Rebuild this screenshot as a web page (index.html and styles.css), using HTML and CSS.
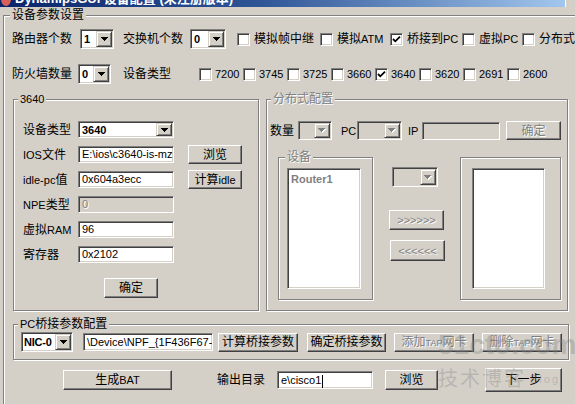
FILE: index.html
```html
<!DOCTYPE html>
<html lang="zh-CN">
<head>
<meta charset="utf-8">
<title>DynamipsGUI 设备配置</title>
<link rel="stylesheet" href="styles.css">
</head>
<body>
<div class="titlebar">
  <span class="ticon"></span>
  <span class="ttext">DynamipsGUI 设备配置 (未注册版本)</span>
  <span class="tbtn"></span>
</div>

<div class="group outer">
  <div class="legend lg6">设备参数设置</div>

  <div class="row r1">
    <span class="w60">路由器个数</span>
    <div class="combo cb-a"><span class="val bold">1</span><span class="arrow"><svg width="7" height="4" viewBox="0 0 7 4"><path d="M0 0h7v1h-1v1h-1v1h-1v1h-1v-1h-1v-1h-1v-1h-1z"/></svg></span></div>
    <span class="w60 ml9">交换机个数</span>
    <div class="combo cb-b"><span class="val bold">0</span><span class="arrow"><svg width="7" height="4" viewBox="0 0 7 4"><path d="M0 0h7v1h-1v1h-1v1h-1v1h-1v-1h-1v-1h-1v-1h-1z"/></svg></span></div>
    <div class="checks1">
      <div class="chk"><span class="box"></span><span class="t">模拟帧中继</span></div>
      <div class="chk"><span class="box"></span><span class="t">模拟<span class="l">ATM</span></span></div>
      <div class="chk"><span class="box"><svg width="9" height="9" viewBox="0 0 9 9"><polyline points="1,4 3.3,6.3 8,1.6" fill="none" stroke="#000" stroke-width="1.8"/></svg></span><span class="t">桥接到<span class="l">PC</span></span></div>
      <div class="chk"><span class="box"></span><span class="t">虚拟<span class="l">PC</span></span></div>
      <div class="chk"><span class="box"></span><span class="t">分布式</span></div>
    </div>
  </div>

  <div class="row r2">
    <span class="w60">防火墙数量</span>
    <div class="combo cb-c"><span class="val bold">0</span><span class="arrow"><svg width="7" height="4" viewBox="0 0 7 4"><path d="M0 0h7v1h-1v1h-1v1h-1v1h-1v-1h-1v-1h-1v-1h-1z"/></svg></span></div>
    <span class="w48 ml12">设备类型</span>
    <div class="checks2">
      <div class="chk c2"><span class="box"></span><span class="l">7200</span></div>
      <div class="chk c2"><span class="box"></span><span class="l">3745</span></div>
      <div class="chk c2"><span class="box"></span><span class="l">3725</span></div>
      <div class="chk c2"><span class="box"></span><span class="l">3660</span></div>
      <div class="chk c2"><span class="box"><svg width="9" height="9" viewBox="0 0 9 9"><polyline points="1,4 3.3,6.3 8,1.6" fill="none" stroke="#000" stroke-width="1.8"/></svg></span><span class="l">3640</span></div>
      <div class="chk c2"><span class="box"></span><span class="l">3620</span></div>
      <div class="chk c2"><span class="box"></span><span class="l">2691</span></div>
      <div class="chk c2"><span class="box"></span><span class="l">2600</span></div>
    </div>
  </div>

  <div class="mid">
    <div class="group g3640">
      <div class="legend lg4 l">3640</div>
      <div class="form">
        <div class="frow">
          <span class="flbl">设备类型</span>
          <div class="combo cb-type"><span class="val bold">3640</span><span class="arrow"><svg width="7" height="4" viewBox="0 0 7 4"><path d="M0 0h7v1h-1v1h-1v1h-1v1h-1v-1h-1v-1h-1v-1h-1z"/></svg></span></div>
        </div>
        <div class="frow">
          <span class="flbl"><span class="l">IOS</span>文件</span>
          <div class="field fw96">E:\ios\c3640-is-mz.bin</div>
          <div class="btn bsm">浏览</div>
        </div>
        <div class="frow">
          <span class="flbl"><span class="l">idle-pc</span>值</span>
          <div class="field fw96">0x604a3ecc</div>
          <div class="btn bsm"><span>计算<span class="l">idle</span></span></div>
        </div>
        <div class="frow">
          <span class="flbl"><span class="l">NPE</span>类型</span>
          <div class="field fw96 dis">0</div>
        </div>
        <div class="frow">
          <span class="flbl">虚拟<span class="l">RAM</span></span>
          <div class="field fw96">96</div>
        </div>
        <div class="frow">
          <span class="flbl">寄存器</span>
          <div class="field fw96">0x2102</div>
        </div>
      </div>
      <div class="btn ok3640">确定</div>
    </div>

    <div class="group gdist">
      <div class="legend lg4 dis">分布式配置</div>
      <div class="drow">
        <span class="w24">数量</span>
        <div class="combo dis cb-num"><span class="val"></span><span class="arrow"><svg width="8" height="5" viewBox="0 0 8 5"><path fill="#fff" d="M1 1h7v1h-1v1h-1v1h-1v1h-1v-1h-1v-1h-1v-1h-1z"/><path fill="#808080" d="M0 0h7v1h-1v1h-1v1h-1v1h-1v-1h-1v-1h-1v-1h-1z"/></svg></span></div>
        <span class="l w14 ml9">PC</span>
        <div class="combo dis cb-pc"><span class="val"></span><span class="arrow"><svg width="8" height="5" viewBox="0 0 8 5"><path fill="#fff" d="M1 1h7v1h-1v1h-1v1h-1v1h-1v-1h-1v-1h-1v-1h-1z"/><path fill="#808080" d="M0 0h7v1h-1v1h-1v1h-1v1h-1v-1h-1v-1h-1v-1h-1z"/></svg></span></div>
        <span class="l w8 ml6">IP</span>
        <div class="field dis ip"></div>
        <div class="btn dis okd">确定</div>
      </div>
      <div class="drow2">
        <div class="group sub1">
          <div class="legend lg6 dis">设备</div>
          <div class="list lst1"><span class="item">Router1</span></div>
        </div>
        <div class="midcol">
          <div class="combo dis cb-mid"><span class="val"></span><span class="arrow"><svg width="8" height="5" viewBox="0 0 8 5"><path fill="#fff" d="M1 1h7v1h-1v1h-1v1h-1v1h-1v-1h-1v-1h-1v-1h-1z"/><path fill="#808080" d="M0 0h7v1h-1v1h-1v1h-1v1h-1v-1h-1v-1h-1v-1h-1z"/></svg></span></div>
          <div class="btn dis mv1 l">&gt;&gt;&gt;&gt;&gt;&gt;</div>
          <div class="btn dis mv2 l">&lt;&lt;&lt;&lt;&lt;&lt;</div>
        </div>
        <div class="group sub2">
          <div class="list lst2"></div>
        </div>
      </div>
    </div>
  </div>

  <div class="group gpc">
    <div class="legend lg4"><span class="l">PC</span>桥接参数配置</div>
    <div class="prow">
      <div class="combo cb-nic"><span class="val bold">NIC-0</span><span class="arrow"><svg width="7" height="4" viewBox="0 0 7 4"><path d="M0 0h7v1h-1v1h-1v1h-1v1h-1v-1h-1v-1h-1v-1h-1z"/></svg></span></div>
      <div class="field nicf">\Device\NPF_{1F436F67-7A2B}</div>
      <div class="btn b80 ml5">计算桥接参数</div>
      <div class="btn b79 ml9">确定桥接参数</div>
      <div class="btn dis b80 ml8"><span>添加<span class="s">TAP</span>网卡</span></div>
      <div class="btn dis b80 ml8"><span>删除<span class="s">TAP</span>网卡</span></div>
    </div>
  </div>

  <div class="brow">
    <div class="btn bat"><span>生成<span class="l">BAT</span></span></div>
    <span class="w48 ml45">输出目录</span>
    <div class="field outf">e\cisco1<span class="caret"></span></div>
    <div class="btn browse">浏览</div>
    <div class="btn next">下一步</div>
  </div>
</div>

<div class="wm">
  <div class="wm1">51cto.com</div>
  <div class="wm2">技术博客<span class="wm3">Blog</span></div>
</div>
</body>
</html>
```

FILE: styles.css
```css
* { box-sizing: border-box; }
html, body { margin: 0; padding: 0; }
body {
  width: 575px;
  height: 404px;
  overflow: hidden;
  position: relative;
  background: #d4d0c8;
  color: #000;
  font-family: "Liberation Sans", "Noto Sans CJK SC", sans-serif;
  font-size: 12px;
  line-height: 14px;
}
.l { font-size: 11px; }
.s { font-size: 9px; }
.bold { font-weight: bold; }

/* title bar (cut off at the top) */
.titlebar {
  height: 7px;
  overflow: hidden;
  display: flex;
  align-items: flex-start;
  background: linear-gradient(90deg, #0a246a 0%, #2f5597 45%, #a6caf0 100%);
}
.ticon {
  flex: none;
  width: 10px;
  height: 14px;
  margin: -8px 0 0 1px;
  border-radius: 50%;
  background: #d8625a;
}
.ttext {
  margin: -9px 0 0 4px;
  color: #fff;
  font-weight: bold;
  font-size: 13px;
  line-height: 16px;
  white-space: nowrap;
}
.tbtn {
  margin-left: auto;
  width: 10px;
  height: 7px;
  background: #d4d0c8;
  border-left: 1px solid #fff;
}

/* etched group boxes */
.group {
  border: 1px solid #808080;
  box-shadow: inset 1px 1px #fff, 1px 1px #fff;
}
.legend {
  width: max-content;
  height: 14px;
  line-height: 14px;
  margin-top: -8px;
  padding: 0 2px;
  background: #d4d0c8;
  white-space: nowrap;
}
.lg4 { margin-left: 4px; }
.lg6 { margin-left: 6px; }
.dis { color: #808080; text-shadow: 1px 1px #fff; }

.outer {
  width: 600px;
  height: 420px;
  margin: 8px 0 0 3px;
}

.row { display: flex; align-items: center; }
.r1 { height: 20px; margin-top: 7px; padding-left: 8px; }
.r2 { height: 20px; margin-top: 15px; padding-left: 8px; }

.w60 { width: 60px; flex: none; white-space: nowrap; }
.w48 { width: 48px; flex: none; white-space: nowrap; }
.w24 { width: 24px; flex: none; }
.w14 { width: 14px; flex: none; }
.w8 { width: 8px; flex: none; }
.ml5 { margin-left: 5px; }
.ml6 { margin-left: 6px; }
.ml8 { margin-left: 8px; }
.ml9 { margin-left: 9px; }
.ml12 { margin-left: 12px; }
.ml45 { margin-left: 45px; }

/* combo boxes */
.combo {
  flex: none;
  display: flex;
  align-items: stretch;
  padding: 1px;
  background: #fff;
  border: 1px solid;
  border-color: #808080 #fff #fff #808080;
  box-shadow: inset 1px 1px #404040, inset -1px -1px #d4d0c8;
}
.combo.dis { background: #d4d0c8; }
.val {
  flex: 1;
  align-self: center;
  padding-left: 2px;
  font-size: 11px;
  white-space: nowrap;
  overflow: hidden;
}
.arrow {
  flex: none;
  width: 16px;
  display: flex;
  align-items: center;
  justify-content: center;
  background: #d4d0c8;
  border: 1px solid;
  border-color: #d4d0c8 #404040 #404040 #d4d0c8;
  box-shadow: inset 1px 1px #fff, inset -1px -1px #808080;
}
.arrow svg { display: block; }
.cb-a { width: 34px; height: 20px; margin-left: 8px; }
.cb-b { width: 36px; height: 20px; margin-left: 7px; }
.cb-c { width: 33px; height: 20px; margin-left: 6px; }
.cb-type { width: 96px; height: 17px; }
.cb-num { width: 34px; height: 19px; margin-left: 4px; }
.cb-pc { width: 45px; height: 19px; margin-left: 2px; }
.cb-mid { width: 46px; height: 20px; margin-left: 3px; }
.cb-nic { width: 52px; height: 20px; }
.cb-nic .val { padding-left: 1px; letter-spacing: -0.2px; }

/* checkboxes */
.checks1 {
  display: grid;
  grid-template-columns: 83px 70px 72px 60px auto;
  margin-left: 11px;
}
.checks2 {
  display: grid;
  grid-template-columns: repeat(8, 44px);
  margin-left: 28px;
}
.chk { display: flex; align-items: center; gap: 4px; white-space: nowrap; }
.chk.c2 { gap: 3px; }
.t { white-space: nowrap; }
.box {
  flex: none;
  width: 13px;
  height: 13px;
  display: flex;
  align-items: center;
  justify-content: center;
  background: #fff;
  border: 1px solid;
  border-color: #808080 #fff #fff #808080;
  box-shadow: inset 1px 1px #404040, inset -1px -1px #d4d0c8;
}
.box svg { display: block; }

/* text fields */
.field {
  flex: none;
  height: 17px;
  padding: 0 2px 0 3px;
  background: #fff;
  border: 1px solid;
  border-color: #808080 #fff #fff #808080;
  box-shadow: inset 1px 1px #404040, inset -1px -1px #d4d0c8;
  font-size: 11px;
  line-height: 15px;
  white-space: nowrap;
  overflow: hidden;
}
.field.dis { background: #d4d0c8; }
.fw96 { width: 96px; }

/* buttons */
.btn {
  flex: none;
  display: flex;
  align-items: center;
  justify-content: center;
  background: #d4d0c8;
  border: 1px solid;
  border-color: #fff #404040 #404040 #fff;
  box-shadow: inset -1px -1px #808080;
  white-space: nowrap;
}

/* middle section */
.mid { display: flex; align-items: flex-start; margin-top: 15px; padding-left: 9px; }
.g3640 { width: 246px; height: 212px; }
.gdist { width: 302px; height: 212px; margin-left: 7px; }

.form { display: flex; flex-direction: column; gap: 8px; margin-top: 15px; }
.frow { display: flex; align-items: center; height: 17px; padding-left: 9px; }
.flbl { flex: none; width: 55px; white-space: nowrap; }
.bsm { width: 54px; height: 19px; margin-left: 14px; }
.ok3640 { width: 54px; height: 20px; margin: 15px 0 0 90px; }

.drow { display: flex; align-items: center; height: 19px; margin-top: 15px; padding-left: 3px; }
.ip { width: 78px; height: 18px; margin-left: 6px; }
.okd { width: 55px; height: 19px; margin-left: 6px; }

.drow2 { display: flex; align-items: flex-start; margin-top: 17px; padding-left: 11px; }
.sub1 { flex: none; width: 95px; height: 143px; }
.sub2 { flex: none; width: 101px; height: 143px; margin-left: 15px; padding: 10px 0 0 11px; }
.list {
  background: #fff;
  border: 1px solid;
  border-color: #808080 #fff #fff #808080;
  box-shadow: inset 1px 1px #404040, inset -1px -1px #d4d0c8;
  padding: 3px 3px;
}
.lst1 { width: 74px; height: 121px; margin: 4px 0 0 8px; }
.lst2 { width: 73px; height: 121px; }
.item { font-size: 11px; font-weight: bold; color: #808080; }
.midcol {
  flex: none;
  width: 56px;
  margin-left: 16px;
  padding-top: 10px;
  display: flex;
  flex-direction: column;
  align-items: flex-start;
}
.mv1 { width: 55px; height: 20px; margin-top: 23px; }
.mv2 { width: 55px; height: 21px; margin: 10px 0 0 1px; }

/* PC bridge group */
.gpc { width: 556px; margin: 13px 0 0 9px; padding-bottom: 7px; }
.prow { display: flex; align-items: center; height: 20px; margin-top: 1px; padding-left: 7px; }
.nicf { width: 130px; height: 18px; margin-left: 10px; line-height: 16px; }
.b80 { width: 80px; height: 19px; }
.b79 { width: 79px; height: 19px; }

/* bottom row */
.brow { display: flex; align-items: center; height: 24px; margin-top: 8px; padding-left: 59px; }
.bat { width: 109px; height: 20px; }
.outf { width: 96px; height: 18px; margin-left: 12px; line-height: 16px; }
.caret { display: inline-block; width: 1px; height: 13px; background: #000; vertical-align: middle; margin-left: 1px; }
.browse { width: 53px; height: 20px; margin-left: 12px; }
.next { width: 77px; height: 24px; margin-left: 47px; }

/* faint watermark overlay */
.wm {
  position: absolute;
  left: 438px;
  top: 330px;
  color: rgba(130, 130, 130, 0.35);
  pointer-events: none;
  white-space: nowrap;
}
.wm1 { font-size: 28px; line-height: 30px; font-weight: bold; }
.wm2 { font-size: 20px; line-height: 26px; margin-top: 6px; letter-spacing: 2px; }
.wm3 { font-size: 11px; margin-left: 4px; vertical-align: top; }
```
